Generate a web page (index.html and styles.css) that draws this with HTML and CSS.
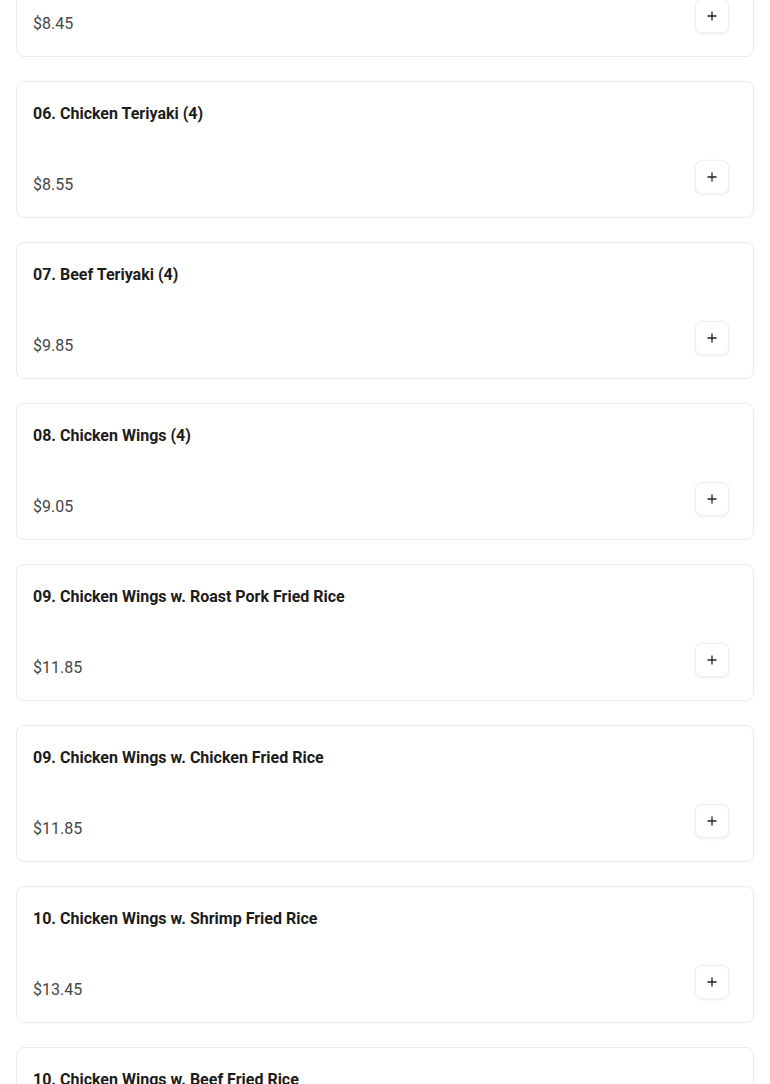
FILE: index.html
```html
<!DOCTYPE html>
<html lang="en">
<head>
<meta charset="utf-8">
<title>Menu</title>
<link rel="stylesheet" href="styles.css">
</head>
<body>
<main class="menu-list">
  <article class="item-card">
    <h3 class="item-title">05. Chicken Teriyaki (2)</h3>
    <div class="item-bottom">
      <span class="item-price">$8.45</span>
      <button class="add-btn" aria-label="Add"><svg viewBox="0 0 12 12" width="12" height="12"><path d="M6 1.5v9M1.5 6h9" stroke="#222" stroke-width="1.3" fill="none"/></svg></button>
    </div>
  </article>
  <article class="item-card">
    <h3 class="item-title">06. Chicken Teriyaki (4)</h3>
    <div class="item-bottom">
      <span class="item-price">$8.55</span>
      <button class="add-btn" aria-label="Add"><svg viewBox="0 0 12 12" width="12" height="12"><path d="M6 1.5v9M1.5 6h9" stroke="#222" stroke-width="1.3" fill="none"/></svg></button>
    </div>
  </article>
  <article class="item-card">
    <h3 class="item-title">07. Beef Teriyaki (4)</h3>
    <div class="item-bottom">
      <span class="item-price">$9.85</span>
      <button class="add-btn" aria-label="Add"><svg viewBox="0 0 12 12" width="12" height="12"><path d="M6 1.5v9M1.5 6h9" stroke="#222" stroke-width="1.3" fill="none"/></svg></button>
    </div>
  </article>
  <article class="item-card">
    <h3 class="item-title">08. Chicken Wings (4)</h3>
    <div class="item-bottom">
      <span class="item-price">$9.05</span>
      <button class="add-btn" aria-label="Add"><svg viewBox="0 0 12 12" width="12" height="12"><path d="M6 1.5v9M1.5 6h9" stroke="#222" stroke-width="1.3" fill="none"/></svg></button>
    </div>
  </article>
  <article class="item-card">
    <h3 class="item-title">09. Chicken Wings w. Roast Pork Fried Rice</h3>
    <div class="item-bottom">
      <span class="item-price">$11.85</span>
      <button class="add-btn" aria-label="Add"><svg viewBox="0 0 12 12" width="12" height="12"><path d="M6 1.5v9M1.5 6h9" stroke="#222" stroke-width="1.3" fill="none"/></svg></button>
    </div>
  </article>
  <article class="item-card">
    <h3 class="item-title">09. Chicken Wings w. Chicken Fried Rice</h3>
    <div class="item-bottom">
      <span class="item-price">$11.85</span>
      <button class="add-btn" aria-label="Add"><svg viewBox="0 0 12 12" width="12" height="12"><path d="M6 1.5v9M1.5 6h9" stroke="#222" stroke-width="1.3" fill="none"/></svg></button>
    </div>
  </article>
  <article class="item-card">
    <h3 class="item-title">10. Chicken Wings w. Shrimp Fried Rice</h3>
    <div class="item-bottom">
      <span class="item-price">$13.45</span>
      <button class="add-btn" aria-label="Add"><svg viewBox="0 0 12 12" width="12" height="12"><path d="M6 1.5v9M1.5 6h9" stroke="#222" stroke-width="1.3" fill="none"/></svg></button>
    </div>
  </article>
  <article class="item-card">
    <h3 class="item-title">10. Chicken Wings w. Beef Fried Rice</h3>
    <div class="item-bottom">
      <span class="item-price">$13.45</span>
      <button class="add-btn" aria-label="Add"><svg viewBox="0 0 12 12" width="12" height="12"><path d="M6 1.5v9M1.5 6h9" stroke="#222" stroke-width="1.3" fill="none"/></svg></button>
    </div>
  </article>
</main>
</body>
</html>
```

FILE: styles.css
```css
html, body {
  margin: 0;
  padding: 0;
  background: #ffffff;
  font-family: Roboto, "Liberation Sans", Arial, sans-serif;
  overflow: hidden;
}

.menu-list {
  display: flex;
  flex-direction: column;
  gap: 24px;
  padding: 0 16px;
  margin-top: -80px;
}

.item-card {
  box-sizing: border-box;
  height: 137px;
  border: 1px solid #ebebeb;
  border-radius: 8px;
  padding: 20px 16px;
  display: flex;
  flex-direction: column;
  justify-content: space-between;
  background: #fff;
}

.item-title {
  margin: 0;
  font-size: 16px;
  line-height: 24px;
  font-weight: 700;
  color: #1c1c1c;
}

.item-bottom {
  display: flex;
  justify-content: space-between;
  align-items: flex-end;
}

.item-price {
  font-size: 16px;
  line-height: 24px;
  color: #474747;
}

.add-btn {
  box-sizing: border-box;
  width: 34px;
  height: 34px;
  margin: 0 8px 3px 0;
  padding: 0;
  border: 1px solid #efefef;
  border-radius: 7px;
  background: #fff;
  box-shadow: 0 1px 3px rgba(0, 0, 0, 0.07);
  display: flex;
  align-items: center;
  justify-content: center;
}
```
